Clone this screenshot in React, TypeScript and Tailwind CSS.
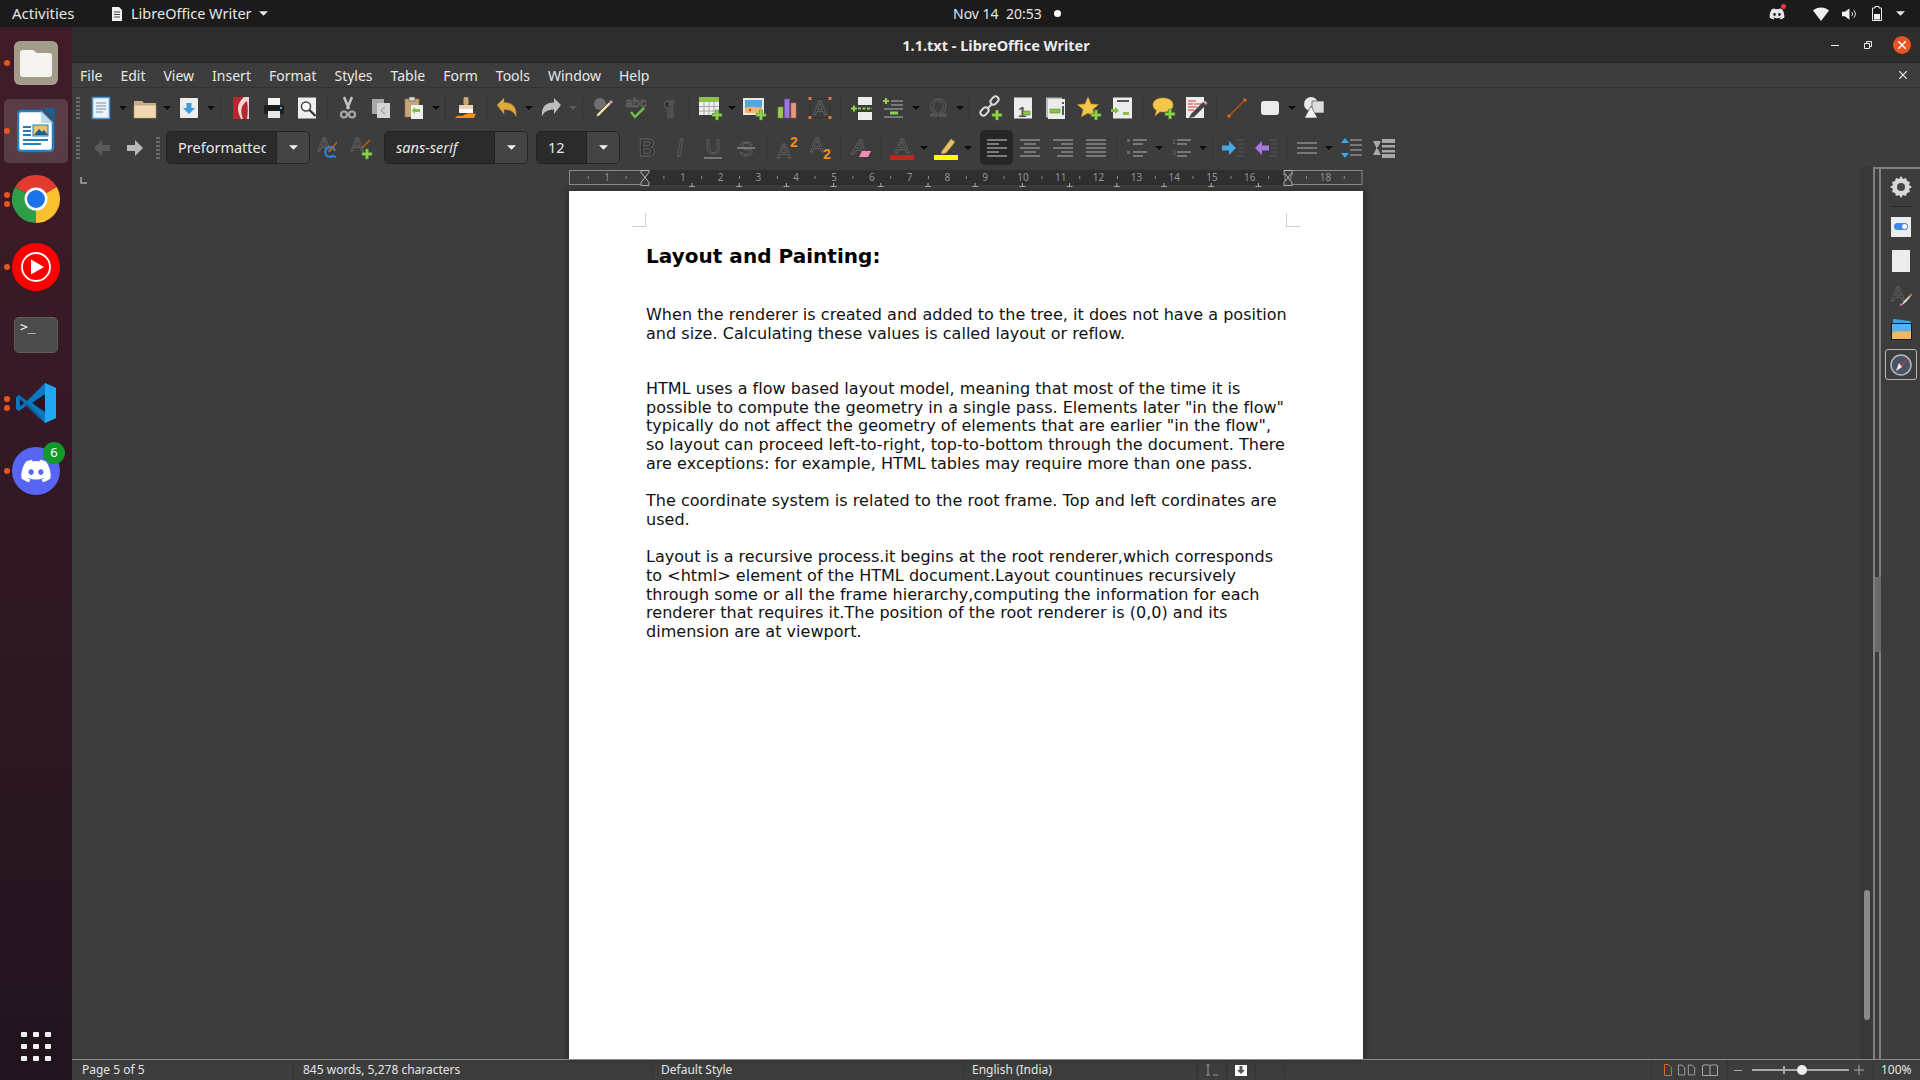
import { ReactNode } from "react";
import { FaDiscord } from "react-icons/fa6";

const Ico = ({ children, className = "w-[24px] h-[24px] overflow-visible" }: { children: ReactNode; className?: string }) => (
  <svg viewBox="0 0 24 24" className={className}>
    {children}
  </svg>
);

const Plus = ({ x = 14, y = 14 }: { x?: number; y?: number }) => (
  <path
    transform={`translate(${x} ${y})`}
    d="M3.5 0h3v3.5H10v3H6.500V10h-3V6.500H0v-3h3.500z"
    fill="#8fd14f"
    stroke="#4f8a22"
    strokeWidth="0.6"
  />
);

const Glyph = ({ t, x = 12, y = 20, size = 23, italic = false, bold = false }: { t: string; x?: number; y?: number; size?: number; italic?: boolean; bold?: boolean }) => (
  <text
    x={x}
    y={y}
    textAnchor="middle"
    fontFamily="Liberation Sans, sans-serif"
    fontSize={size}
    fontStyle={italic ? "italic" : "normal"}
    fontWeight={bold ? 700 : 400}
    fill="#303030"
    stroke="#666666"
    strokeWidth="0.8"
  >
    {t}
  </text>
);

const Lines = ({ rows, stroke = "#8c8c8c" }: { rows: [number, number, number][]; stroke?: string }) => (
  <g stroke={stroke} strokeWidth="1.500">
    {rows.map(([x1, x2, y], i) => (
      <line key={i} x1={x1} x2={x2} y1={y} y2={y} />
    ))}
  </g>
);

const Btn = ({ children }: { children?: ReactNode }) => (
  <div className="w-[33px] h-full shrink-0 flex items-center justify-center">{children}</div>
);

const Dd = ({ dim = false }: { dim?: boolean }) => (
  <div className="w-[11px] h-full shrink-0 flex items-center justify-center">
    <svg viewBox="0 0 8 4" className="w-[8px] h-[4px]">
      <path d="M0 0h8L4 4z" fill={dim ? "#5c5c5c" : "#0c0c0c"} />
    </svg>
  </div>
);

const Sep = () => (
  <div className="w-[8px] h-full shrink-0 flex items-center justify-center">
    <div className="w-px h-[28px] bg-[#333333]" />
  </div>
);

const Grip = () => (
  <div className="w-[4px] h-[24px] shrink-0 flex flex-col justify-between py-px">
    {[0, 1, 2, 3, 4, 5].map((i) => (
      <div key={i} className="h-[2px] bg-[#6b6b6b]" />
    ))}
  </div>
);

const Combo = ({ label, w, text, italic = false }: { label: string; w: string; text: string; italic?: boolean }) => (
  <div className={`${w} h-[33px] shrink-0 flex rounded-[5px] border border-[#222222] bg-[#2b2b2b] overflow-hidden`}>
    <div className="flex-1 min-w-0 pl-[11px]">
      <div className={`${text} text-[14.500px] leading-[31px] text-[#e8e8e8] overflow-hidden whitespace-nowrap ${italic ? "italic" : ""}`}>
        {label}
      </div>
    </div>
    <div className="w-[33px] shrink-0 flex items-center justify-center bg-[#444444] border-l border-[#222222]">
      <svg viewBox="0 0 8 4" className="w-[9px] h-[5px]">
        <path d="M0 0h8L4 4z" fill="#f2f2f2" />
      </svg>
    </div>
  </div>
);

const rulerNums = Array.from({ length: 18 }, (_, i) => i + 1);
const tabStops = Array.from({ length: 13 }, (_, i) => 123 + i * 47.2);

const Ruler = () => (
  <svg viewBox="0 0 794 20" className="w-[794px] h-[20px] block">
    <rect x="76" y="1" width="643" height="15" fill="#2f2f2f" />
    <rect x="0.500" y="1.500" width="76" height="14" fill="none" stroke="#8a8a8a" />
    <rect x="719" y="1.500" width="74" height="14" fill="none" stroke="#8a8a8a" />
    <text x="38" y="12" textAnchor="middle" fontSize="10" fill="#8f949b" fontFamily="Noto Sans, sans-serif">1</text>
    {rulerNums.map((n) => (
      <text key={n} x={76 + 37.8 * n} y="12" textAnchor="middle" fontSize="10" fill="#8f949b" fontFamily="Noto Sans, sans-serif">
        {n}
      </text>
    ))}
    {[-1.5, -0.5, ...rulerNums.map((n) => n - 0.5), 18.5].map((n) => (
      <line key={n} x1={76 + 37.8 * n} x2={76 + 37.8 * n} y1="7" y2="10" stroke="#8a8a8a" />
    ))}
    {tabStops.map((x) => (
      <path key={x} d={`M${x} 14v3M${x - 3} 17.500h6`} stroke="#b0b0b0" fill="none" />
    ))}
    {[76, 719].map((x) => (
      <path key={x} d={`M${x - 4} 1.500h8v2L${x} 8.500l-4-5zM${x} 8.500l4 5v3h-8v-3z`} fill="#3c3c3c" stroke="#b5b5b5" />
    ))}
  </svg>
);

const DockItem = ({ children, dots = 0, active = false }: { children: ReactNode; dots?: number; active?: boolean }) => (
  <div className="relative h-[68px] flex items-center justify-center">
    {active && <div className="absolute left-[4px] right-[4px] top-[2px] bottom-[2px] rounded-[5px] bg-[#ffffff24]" />}
    <div className="absolute left-[4px] top-0 bottom-0 flex flex-col justify-center gap-[3px]">
      {Array.from({ length: dots }).map((_, i) => (
        <div key={i} className="w-[6px] h-[6px] rounded-full bg-[#e9541f]" />
      ))}
    </div>
    <div className="relative">{children}</div>
  </div>
);

const Dock = () => (
  <aside className="w-[72px] shrink-0 flex flex-col pt-[2px] bg-gradient-to-b from-[#401c28] to-[#21141f]">
    <DockItem dots={1}>
      <svg viewBox="0 0 44 44" className="w-[44px] h-[44px]">
        <rect width="44" height="44" rx="6" fill="#a49c8b" />
        <path d="M6 12a3 3 0 0 1 3-3h10l4 3h12a3 3 0 0 1 3 3v18a3 3 0 0 1-3 3H9a3 3 0 0 1-3-3z" fill="#f6f4f0" />
      </svg>
    </DockItem>
    <DockItem dots={1} active>
      <svg viewBox="0 0 38 46" className="w-[38px] h-[46px]">
        <path d="M25 0h13v13z" fill="#1d5f8f" />
        <path d="M4 3h20l12 12v25a3 3 0 0 1-3 3H4a3 3 0 0 1-3-3V6a3 3 0 0 1 3-3z" fill="#fff" stroke="#1f80bd" strokeWidth="2.500" />
        <path d="M24 3v12h12z" fill="#bcdcef" />
        <rect x="6" y="18" width="8" height="2" fill="#1f80bd" />
        <rect x="6" y="22" width="8" height="2" fill="#1f80bd" />
        <rect x="6" y="26" width="8" height="2" fill="#1f80bd" />
        <rect x="16" y="17" width="15" height="11" fill="#e9c46a" stroke="#1f80bd" />
        <path d="M17 27l5-6 3 3 2-2 4 5z" fill="#1d5f8f" />
        <rect x="6" y="31" width="25" height="2" fill="#1f80bd" />
        <rect x="6" y="35" width="18" height="2" fill="#1f80bd" />
      </svg>
    </DockItem>
    <DockItem dots={2}>
      <svg viewBox="0 0 48 48" className="w-[48px] h-[48px]">
        <path d="M24 24L3.200 12A24 24 0 0 1 44.780 12Z" fill="#e33b2e" />
        <path d="M24 24L44.780 12A24 24 0 0 1 24 48Z" fill="#fbc02d" />
        <path d="M24 24L24 48A24 24 0 0 1 3.200 12Z" fill="#2e9e49" />
        <circle cx="24" cy="24" r="11.500" fill="#fff" />
        <circle cx="24" cy="24" r="9" fill="#1a73e8" />
      </svg>
    </DockItem>
    <DockItem dots={1}>
      <svg viewBox="0 0 48 48" className="w-[48px] h-[48px]">
        <circle cx="24" cy="24" r="24" fill="#ff0000" />
        <circle cx="24" cy="24" r="14" fill="none" stroke="#fff" strokeWidth="1.800" />
        <path d="M19 16.500L32 24l-13 7.500z" fill="#fff" />
      </svg>
    </DockItem>
    <DockItem>
      <div className="w-[44px] h-[36px] rounded-[5px] bg-[#4b4b4b] border border-[#5e5e5e] pl-[5px] pt-px text-[#f0f0f0] text-[13px] leading-[15px] font-['DejaVu_Sans_Mono',monospace]">
        &gt;_
      </div>
    </DockItem>
    <DockItem dots={2}>
      <svg viewBox="0 0 42 42" className="w-[42px] h-[42px]">
        <path d="M30 1L12 19 4 13 1 15v12l3 2 8-6 18 18 11-5V6z" fill="#0a78c2" />
        <path d="M1 15l3-2 23 21-3 3z" fill="#0a5f9e" opacity="0.5" />
        <path d="M30 1l11 5v30l-11 5z" fill="#22a7f2" />
        <path d="M30 12L17 21l13 9z" fill="#241722" />
        <path d="M5 17.500l4 3.500-4 3.500z" fill="#241722" />
      </svg>
    </DockItem>
    <DockItem dots={1}>
      <div className="w-[48px] h-[48px] rounded-full bg-[#5865f2] flex items-center justify-center">
        <FaDiscord className="w-[32px] h-[32px] text-white" />
      </div>
      <div className="absolute -right-[5px] -top-[5px] w-[22px] h-[22px] rounded-full bg-[#119a2a] flex items-center justify-center text-[13px] text-white">
        6
      </div>
    </DockItem>
    <div className="mt-auto mb-[19px] mx-auto grid grid-cols-3 gap-x-[6px] gap-y-[7px]">
      {[0, 1, 2, 3, 4, 5, 6, 7, 8].map((i) => (
        <div key={i} className="w-[6px] h-[5px] rounded-[1px] bg-[#f2f2f2]" />
      ))}
    </div>
  </aside>
);

const TopBar = () => (
  <header className="h-[27px] shrink-0 flex items-center bg-[#1b1b1b] text-[14.500px] text-[#e6e6e6]">
    <span className="ml-[12px] w-[99px] text-[15px]">Activities</span>
    <svg viewBox="0 0 12 14" className="w-[12px] h-[14px]">
      <path d="M1 0h7l3 3v11H1z" fill="#f0f0f0" />
      <path d="M3 5h6M3 7.500h6M3 10h6" stroke="#444" />
    </svg>
    <span className="ml-[8px] w-[128px] whitespace-nowrap">LibreOffice Writer</span>
    <svg viewBox="0 0 8 4" className="w-[9px] h-[5px]">
      <path d="M0 0h8L4 4z" fill="#e6e6e6" />
    </svg>
    <span className="ml-[685px] w-[94px] whitespace-pre text-[14px]">Nov 14  20:53</span>
    <div className="ml-[7px] w-[7px] h-[7px] rounded-full bg-white" />
    <div className="ml-auto flex items-center">
      <div className="relative w-[16px] h-[16px] mr-[28px]">
        <FaDiscord className="w-[16px] h-[16px] text-[#e6e6e6]" />
        <div className="absolute -right-px -top-[2px] w-[5px] h-[5px] rounded-full bg-[#ed3b3b]" />
      </div>
      <svg viewBox="0 0 16 14" className="w-[16px] h-[14px] mr-[13px]">
        <path d="M0 3.500C4-.500 12-.500 16 3.500L8 14z" fill="#f0f0f0" />
      </svg>
      <svg viewBox="0 0 16 14" className="w-[15px] h-[14px] mr-[15px]">
        <path d="M0 4.500h3L8 1v12L3 9.500H0z" fill="#f0f0f0" />
        <path d="M10.500 5a3 3 0 0 1 0 4M12.500 3a6 6 0 0 1 0 8" stroke="#f0f0f0" fill="none" />
      </svg>
      <svg viewBox="0 0 10 15" className="w-[10px] h-[15px] mr-[14px]">
        <path d="M3 .500h4v1.500h2.500v12.500h-9V2H3z" fill="none" stroke="#f0f0f0" />
        <rect x="2" y="8" width="6" height="5.500" fill="#f0f0f0" />
      </svg>
      <svg viewBox="0 0 8 4" className="w-[9px] h-[5px] mr-[15px]">
        <path d="M0 0h8L4 4z" fill="#e6e6e6" />
      </svg>
    </div>
  </header>
);

const TitleBar = () => (
  <div className="relative h-[36px] shrink-0 flex items-center justify-center pt-[2px] bg-[#2d2d2d] border-b border-[#262626]">
    <span className="text-[14.500px] font-bold text-[#ebebeb]">1.1.txt - LibreOffice Writer</span>
    <div className="absolute right-[9px] top-0 bottom-0 flex items-center">
      <div className="w-[8px] h-px bg-[#eeeeee] mr-[25px] mt-[2px]" />
      <svg viewBox="0 0 8 8" className="w-[8px] h-[8px] mr-[21px]">
        <path d="M.500 2.500h5v5h-5zM2.500 2V.500h5v5H6" fill="none" stroke="#eeeeee" />
      </svg>
      <div className="w-[18px] h-[18px] rounded-full bg-[#e95420] flex items-center justify-center">
        <svg viewBox="0 0 8 8" className="w-[8px] h-[8px]">
          <path d="M0 0l8 8M8 0L0 8" stroke="#fff" strokeWidth="1.500" />
        </svg>
      </div>
    </div>
  </div>
);

const MenuBar = () => (
  <div className="h-[25px] shrink-0 flex items-center pl-[8px] pr-[13px] border-b border-[#333333] text-[14px] text-[#e8e8e8]">
    {["File", "Edit", "View", "Insert", "Format", "Styles", "Table", "Form", "Tools", "Window", "Help"].map((m) => (
      <span key={m} className="mr-[18px]">
        {m}
      </span>
    ))}
    <svg viewBox="0 0 8 8" className="ml-auto w-[8px] h-[8px]">
      <path d="M0 0l8 8M8 0L0 8" stroke="#eeeeee" strokeWidth="1.200" />
    </svg>
  </div>
);

const ToolbarOne = () => (
  <div className="h-[40px] shrink-0 flex items-center pl-[4px]">
    <Grip />
    <div className="w-[4px]" />
    <Btn>
      <Ico>
        <rect x="3.500" y="1.500" width="17" height="21" fill="#eef3f8" stroke="#4a93cf" strokeWidth="1.500" />
        <Lines rows={[[7, 17, 7], [7, 17, 10], [7, 17, 13], [7, 14, 16]]} stroke="#9fb2c4" />
      </Ico>
    </Btn>
    <Dd />
    <Btn>
      <Ico>
        <path d="M1 5h8l2 2h12v5H1z" fill="#c8b08a" />
        <rect x="1" y="9" width="22" height="13" fill="#f0d9ae" stroke="#b39a70" strokeWidth="0.600" />
      </Ico>
    </Btn>
    <Dd />
    <Btn>
      <Ico>
        <rect x="3" y="2" width="18" height="20" rx="1" fill="#eeeeee" />
        <path d="M9.500 7h5v5h3.500L12 18l-6-6h3.500z" fill="#3f9ade" />
      </Ico>
    </Btn>
    <Dd />
    <Sep />
    <Btn>
      <Ico>
        <rect x="4" y="1" width="16" height="22" fill="#b5282e" />
        <path d="M20 1h-5C7 9 8 14 12 23h2C11 15 12 9 18 5c1 6 1 12 0 18h2z" fill="#f3d5d5" />
      </Ico>
    </Btn>
    <Btn>
      <Ico>
        <rect x="6" y="2" width="12" height="7" fill="#f2f2f2" />
        <rect x="2" y="9" width="20" height="9" rx="1.500" fill="#1c1c1c" />
        <rect x="6" y="15" width="12" height="7" fill="#e6e6e6" />
        <rect x="18" y="11" width="2" height="2" fill="#33b5e5" />
      </Ico>
    </Btn>
    <Btn>
      <Ico>
        <rect x="3" y="1.500" width="18" height="21" fill="#eeeeee" />
        <circle cx="11" cy="10.500" r="4.500" fill="#fff" stroke="#444" strokeWidth="1.500" />
        <path d="M14.500 14l6 6" stroke="#333" strokeWidth="2.200" />
      </Ico>
    </Btn>
    <Sep />
    <Btn>
      <Ico>
        <path d="M8 1l5 12M16 1l-5 12" stroke="#c4c4c4" strokeWidth="2.500" />
        <circle cx="8" cy="18.500" r="3" fill="none" stroke="#a8a8a8" strokeWidth="2.200" />
        <circle cx="16" cy="18.500" r="3" fill="none" stroke="#a8a8a8" strokeWidth="2.200" />
      </Ico>
    </Btn>
    <Btn>
      <Ico>
        <rect x="3" y="3" width="12" height="15" fill="#a8a8a8" />
        <rect x="8" y="7" width="13" height="15" fill="#d4d4d4" />
        <path d="M16 11l-4 3.500 4 3.500" stroke="#a8a8a8" fill="none" strokeWidth="1.500" />
      </Ico>
    </Btn>
    <Btn>
      <Ico>
        <rect x="3" y="3" width="14" height="18" fill="#c8a878" stroke="#8b6f48" strokeWidth="0.600" />
        <rect x="7" y="1" width="6" height="4" fill="#d8d8d8" stroke="#555" strokeWidth="0.600" />
        <rect x="9" y="9" width="12" height="14" fill="#f0f0f0" />
        <path d="M18 13h-5v-2l-3 3.500 3 3.500v-2h5z" fill="#7bc043" />
      </Ico>
    </Btn>
    <Dd />
    <Sep />
    <Btn>
      <Ico>
        <rect x="9.500" y="1" width="5" height="8" rx="1.500" fill="#c8a878" />
        <rect x="5" y="9" width="14" height="4" fill="#e8d4b0" />
        <rect x="5" y="13" width="14" height="4" fill="#ffffff" />
        <path d="M1 22c3-4 6-1 9-3s8-2 12-1l-2 4z" fill="#f28c1e" />
      </Ico>
    </Btn>
    <Sep />
    <Btn>
      <Ico>
        <path d="M2 9l7-7v4.500c8 0 13 4 12 14-2-5-6-7-12-7V18z" fill="#e0a93e" stroke="#b8842a" strokeWidth="0.500" />
      </Ico>
    </Btn>
    <Dd />
    <Btn>
      <Ico>
        <path d="M22 9l-7-7v4.500C7 6.500 2 10.500 3 20.500c2-5 6-7 12-7V18z" fill="#bdbdbd" />
      </Ico>
    </Btn>
    <Dd dim />
    <Sep />
    <Btn>
      <Ico>
        <circle cx="9" cy="8" r="6" fill="#6f6f6f" />
        <path d="M5 21l3-1 12-12-2-2L6 18z" fill="#f0e0a8" stroke="#333" strokeWidth="0.600" />
        <path d="M18 6l2 2 2-2-2-2z" fill="#e88ad0" />
      </Ico>
    </Btn>
    <Btn>
      <Ico>
        <Glyph t="abc" y={11} size={13} />
        <path d="M7 16l4 5 9-9" fill="none" stroke="#6cc04a" strokeWidth="2.500" />
      </Ico>
    </Btn>
    <Btn>
      <Ico>
        <Glyph t="¶" y={19} size={20} bold />
      </Ico>
    </Btn>
    <Sep />
    <Btn>
      <Ico>
        <rect x="1" y="1" width="20" height="18" fill="#f0f0f0" />
        <rect x="1" y="1" width="20" height="5" fill="#8fc04a" />
        <path d="M1 10.500h20M1 15h20M6 6v13M11 6v13M16 6v13" stroke="#a8a8a8" />
        <Plus />
      </Ico>
    </Btn>
    <Dd />
    <Btn>
      <Ico>
        <rect x="1" y="2" width="21" height="17" fill="#e8e8e8" />
        <rect x="3" y="4" width="17" height="13" fill="#4fa8e0" />
        <path d="M3 12c6-3 11 0 17-1v6H3z" fill="#f0b860" />
        <circle cx="8" cy="14" r="1.200" fill="#d23b2b" />
        <Plus />
      </Ico>
    </Btn>
    <Btn>
      <Ico>
        <rect x="3" y="11" width="5" height="11" fill="#9ccc4e" stroke="#6f9a30" strokeWidth="0.600" />
        <rect x="9.500" y="3" width="5" height="19" fill="#9a78d8" stroke="#6f4fae" strokeWidth="0.600" />
        <rect x="16" y="7" width="5" height="15" fill="#e89a80" stroke="#b86a50" strokeWidth="0.600" />
      </Ico>
    </Btn>
    <Btn>
      <Ico>
        <rect x="2" y="2.500" width="20" height="19" fill="none" stroke="#2a2a2a" strokeDasharray="2 1.500" />
        <Glyph t="A" y={19} size={20} />
        <g fill="#e0783a">
          <rect x="0.500" y="1" width="3" height="3" />
          <rect x="20.500" y="1" width="3" height="3" />
          <rect x="0.500" y="20" width="3" height="3" />
          <rect x="20.500" y="20" width="3" height="3" />
        </g>
      </Ico>
    </Btn>
    <Sep />
    <Btn>
      <Ico>
        <rect x="9" y="1" width="14" height="8" fill="#ececec" />
        <rect x="9" y="16" width="14" height="8" fill="#ececec" />
        <path d="M9 12.500h14" stroke="#8fd14f" strokeWidth="2" strokeDasharray="3 1.500" />
        <path d="M2 11.500h2V9.500h2v2h2v2H6v2H4v-2H2z" fill="#8fd14f" />
      </Ico>
    </Btn>
    <Btn>
      <Ico>
        <path d="M1 4h2V2h2v2h2v2H5v2H3V6H1z" fill="#8fd14f" />
        <Lines rows={[[9, 21, 5], [9, 21, 9], [2, 21, 13], [2, 21, 21]]} />
        <rect x="8" y="15.500" width="8" height="3" fill="#8fd14f" />
      </Ico>
    </Btn>
    <Dd />
    <Btn>
      <Ico>
        <Glyph t="Ω" y={20} size={23} />
      </Ico>
    </Btn>
    <Dd />
    <Sep />
    <Btn>
      <Ico>
        <g fill="none" stroke="#d8d8d8" strokeWidth="2">
          <rect x="12" y="1.500" width="9" height="6" rx="3" transform="rotate(-45 16.500 4.500)" />
          <rect x="2" y="12.500" width="9" height="6" rx="3" transform="rotate(-45 6.500 15.500)" />
          <path d="M9 13l5-5" />
        </g>
        <Plus />
      </Ico>
    </Btn>
    <Btn>
      <Ico>
        <rect x="3" y="1.500" width="18" height="21" fill="#ececec" />
        <text x="7" y="21" fontSize="15" fontWeight="700" fill="#555" fontFamily="Liberation Sans, sans-serif">1</text>
        <rect x="12" y="15" width="7" height="4" fill="#8cc04a" stroke="#5c8a26" strokeWidth="0.600" />
      </Ico>
    </Btn>
    <Btn>
      <Ico>
        <rect x="2" y="1.500" width="16" height="20" fill="#bcbcbc" />
        <rect x="4" y="3" width="17" height="20" fill="#ececec" />
        <rect x="6" y="13" width="10" height="4" fill="#8cc04a" stroke="#5c8a26" strokeWidth="0.600" />
        <rect x="18" y="6" width="2" height="2" fill="#555" />
        <rect x="18" y="10" width="2" height="9" fill="#555" />
      </Ico>
    </Btn>
    <Btn>
      <Ico>
        <path d="M11 1l3 7 7.500.600-5.700 4.900 1.800 7.300L11 17l-6.600 3.800 1.800-7.300L.500 8.600 8 8z" fill="#f5c64c" stroke="#c98f20" strokeWidth="0.600" />
        <Plus />
      </Ico>
    </Btn>
    <Btn>
      <Ico>
        <rect x="3" y="1.500" width="19" height="21" fill="#ececec" />
        <path d="M7 5h12" stroke="#555" strokeWidth="2" />
        <path d="M1 13h4v-2l4 3.500-4 3.500v-2H1z" fill="#7bc043" />
        <rect x="13" y="16" width="6" height="3" fill="#8cc04a" />
      </Ico>
    </Btn>
    <Sep />
    <Btn>
      <Ico>
        <path d="M2 9c0-5 5-7 10-7s10 2 10 7-5 7-10 7c-1 0-2 0-3-.300L4 20l1.500-5.500C3 13 2 11 2 9z" fill="#f5c64c" stroke="#c98f20" strokeWidth="0.600" />
        <Plus y={13} />
      </Ico>
    </Btn>
    <Btn>
      <Ico>
        <rect x="2" y="1" width="18" height="21" fill="#ececec" />
        <path d="M4 5h8M4 8h5M10 8h7M4 11h9M4 14h6" stroke="#d23b2b" strokeWidth="1.200" />
        <path d="M5 22l2-4L19 6l3 3L10 21z" fill="#444" />
        <path d="M19 6l3 3 1.500-2-2.500-2.500z" fill="#e88ad0" />
      </Ico>
    </Btn>
    <Sep />
    <Btn>
      <Ico>
        <path d="M4 20L20 4" stroke="#b8561c" strokeWidth="1.200" />
        <rect x="2.500" y="18.500" width="3" height="3" fill="#d9661e" />
        <rect x="18.500" y="2.500" width="3" height="3" fill="#d9661e" />
      </Ico>
    </Btn>
    <Btn>
      <Ico>
        <rect x="3" y="5" width="18" height="14" rx="3" fill="#ececec" />
      </Ico>
    </Btn>
    <Dd />
    <Btn>
      <Ico>
        <circle cx="9" cy="8" r="7" fill="#e8e8e8" />
        <rect x="10" y="5" width="12" height="12" fill="#dcdcdc" stroke="#3c3c3c" strokeWidth="0.600" />
        <path d="M9 10l6.500 12h-13z" fill="#f2f2f2" stroke="#3c3c3c" strokeWidth="0.600" />
      </Ico>
    </Btn>
  </div>
);

const ToolbarTwo = () => (
  <div className="h-[39px] shrink-0 flex items-center pl-[4px]">
    <Grip />
    <div className="w-[5px]" />
    <Btn>
      <Ico>
        <path d="M4 12l8-8v5h8v6h-8v5z" fill="#5a5a5a" />
      </Ico>
    </Btn>
    <Btn>
      <Ico>
        <path d="M20 12l-8-8v5H4v6h8v5z" fill="#b8b8b8" />
      </Ico>
    </Btn>
    <div className="w-[5px]" />
    <Grip />
    <div className="w-[6px]" />
    <Combo label="Preformatted" w="w-[144px]" text="w-[88px]" />
    <Btn>
      <Ico>
        <Glyph t="A" x={9} y={15} size={19} />
        <path d="M20 15a5 5 0 1 0-2 5l3 1" fill="none" stroke="#2f7fd8" strokeWidth="2.200" />
        <path d="M14 16l8-10" stroke="#b8661c" strokeWidth="1.500" />
      </Ico>
    </Btn>
    <Btn>
      <Ico>
        <Glyph t="A" x={9} y={15} size={19} />
        <Plus y={13} />
        <path d="M14 12l8-8" stroke="#b8661c" strokeWidth="1.500" />
      </Ico>
    </Btn>
    <div className="w-[8px]" />
    <Combo label="sans-serif" w="w-[144px]" text="w-[88px]" italic />
    <div className="w-[8px]" />
    <Combo label="12" w="w-[84px]" text="w-[30px]" />
    <div className="w-[10px]" />
    <Btn>
      <Ico>
        <Glyph t="B" bold />
      </Ico>
    </Btn>
    <Btn>
      <Ico>
        <Glyph t="I" italic />
      </Ico>
    </Btn>
    <Btn>
      <Ico>
        <Glyph t="U" y={18} size={21} />
        <path d="M3 22h18" stroke="#8a8a8a" strokeWidth="1.500" />
      </Ico>
    </Btn>
    <Btn>
      <Ico>
        <Glyph t="S" size={21} />
        <path d="M3 12h18" stroke="#8a8a8a" strokeWidth="1.500" />
      </Ico>
    </Btn>
    <Sep />
    <Btn>
      <Ico>
        <Glyph t="A" x={9} y={22} size={20} />
        <text x="19" y="11" textAnchor="middle" fontSize="14" fontWeight="700" fill="#f28c1e" fontFamily="Liberation Sans, sans-serif">2</text>
      </Ico>
    </Btn>
    <Btn>
      <Ico>
        <Glyph t="A" x={9} y={16} size={20} />
        <text x="19" y="23" textAnchor="middle" fontSize="14" fontWeight="700" fill="#f28c1e" fontFamily="Liberation Sans, sans-serif">2</text>
      </Ico>
    </Btn>
    <Sep />
    <Btn>
      <Ico>
        <Glyph t="A" x={10} y={18} size={21} italic />
        <path d="M10 21l3-6h9l-3 6z" fill="#f28cbc" />
      </Ico>
    </Btn>
    <Sep />
    <Btn>
      <Ico>
        <Glyph t="A" y={17} size={21} />
        <rect x="0" y="19" width="24" height="5" fill="#c9211e" />
      </Ico>
    </Btn>
    <Dd />
    <Btn>
      <Ico>
        <path d="M8 15l9-12 4 3-9 11-5 1z" fill="#e9c160" stroke="#a8832a" strokeWidth="0.500" />
        <rect x="0" y="19" width="24" height="5" fill="#ffff00" />
      </Ico>
    </Btn>
    <Dd />
    <div className="w-[7px]" />
    <div className="w-[33px] h-[35px] shrink-0 rounded-[5px] bg-[#262626] flex items-center justify-center">
      <Ico>
        <Lines rows={[[2, 22, 4], [2, 14, 8], [2, 22, 12], [2, 14, 16], [2, 22, 20]]} stroke="#9a9a9a" />
      </Ico>
    </div>
    <Btn>
      <Ico>
        <Lines rows={[[2, 22, 4], [6, 18, 8], [2, 22, 12], [6, 18, 16], [2, 22, 20]]} />
      </Ico>
    </Btn>
    <Btn>
      <Ico>
        <Lines rows={[[2, 22, 4], [10, 22, 8], [2, 22, 12], [10, 22, 16], [6, 22, 20]]} />
      </Ico>
    </Btn>
    <Btn>
      <Ico>
        <Lines rows={[[2, 22, 4], [2, 22, 8], [2, 22, 12], [2, 22, 16], [2, 22, 20]]} />
      </Ico>
    </Btn>
    <Sep />
    <Btn>
      <Ico>
        <Lines rows={[[8, 22, 4], [8, 18, 8], [8, 22, 16], [8, 18, 20]]} />
        <rect x="2" y="3" width="3" height="3" fill="#6a6a6a" />
        <rect x="2" y="15" width="3" height="3" fill="#6a6a6a" />
      </Ico>
    </Btn>
    <Dd />
    <Btn>
      <Ico>
        <Lines rows={[[8, 22, 4], [8, 18, 8], [8, 22, 16], [8, 18, 20]]} />
        <text x="3" y="8" fontSize="7" fill="#6a6a6a" fontFamily="Liberation Sans, sans-serif">1</text>
        <text x="3" y="19" fontSize="7" fill="#6a6a6a" fontFamily="Liberation Sans, sans-serif">3</text>
      </Ico>
    </Btn>
    <Dd />
    <Sep />
    <Btn>
      <Ico>
        <path d="M1 9.500h7V5l7 7-7 7v-4.500H1z" fill="#4aa8e8" />
        <Lines rows={[[15, 23, 4], [17, 23, 8], [17, 23, 12], [17, 23, 16], [15, 23, 20]]} stroke="#4c4c4c" />
      </Ico>
    </Btn>
    <Btn>
      <Ico>
        <path d="M15 9.500H8V5l-7 7 7 7v-4.500h7z" fill="#a878e0" />
        <Lines rows={[[15, 23, 4], [17, 23, 8], [17, 23, 12], [17, 23, 16], [15, 23, 20]]} stroke="#4c4c4c" />
      </Ico>
    </Btn>
    <Sep />
    <Btn>
      <Ico>
        <Lines rows={[[2, 22, 7], [2, 22, 12], [2, 22, 17]]} />
      </Ico>
    </Btn>
    <Dd />
    <Btn>
      <Ico>
        <path d="M6 2l4 5H2zM6 22l-4-5h8z" fill="#3aa6e8" />
        <Lines rows={[[11, 23, 4], [11, 23, 9], [11, 23, 14], [11, 23, 19]]} />
      </Ico>
    </Btn>
    <Btn>
      <Ico>
        <path d="M1 5h8L6 11h-1v2h1l3 6H1l3-6V11z" fill="#a8a8a8" />
        <rect x="10" y="3" width="13" height="4" fill="#a8a8a8" />
        <rect x="10" y="9" width="13" height="2.500" fill="#a8a8a8" />
        <rect x="10" y="14" width="13" height="2.500" fill="#a8a8a8" />
        <rect x="10" y="18" width="13" height="4" fill="#a8a8a8" />
      </Ico>
    </Btn>
  </div>
);

const DocPage = () => (
  <div className="ml-[497px] w-[794px] flex-1 min-h-0 bg-white shadow-[-3px_0_5px_#2f2f2f,3px_0_5px_#2f2f2f] pt-[22px] px-[63px] font-['DejaVu_Sans',sans-serif] text-[16px] leading-[18.670px] tracking-[0.03px] text-[#111111] overflow-hidden">
    <div className="flex justify-between">
      <div className="w-[14px] h-[14px] border-r border-b border-[#cfcfcf]" />
      <div className="w-[14px] h-[14px] border-l border-b border-[#cfcfcf]" />
    </div>
    <div className="pl-[14px]">
      <h1 className="mt-[18px] text-[20px] leading-[22px] font-bold text-black">Layout and Painting:</h1>
      <p className="mt-[39px]">
        When the renderer is created and added to the tree, it does not have a position
        <br />
        and size. Calculating these values is called layout or reflow.
      </p>
      <p className="mt-[36.800px]">
        HTML uses a flow based layout model, meaning that most of the time it is
        <br />
        possible to compute the geometry in a single pass. Elements later "in the flow"
        <br />
        typically do not affect the geometry of elements that are earlier "in the flow",
        <br />
        so layout can proceed left-to-right, top-to-bottom through the document. There
        <br />
        are exceptions: for example, HTML tables may require more than one pass.
      </p>
      <p className="mt-[18.670px]">
        The coordinate system is related to the root frame. Top and left cordinates are
        <br />
        used.
      </p>
      <p className="mt-[18.670px]">
        Layout is a recursive process.it begins at the root renderer,which corresponds
        <br />
        to &lt;html&gt; element of the HTML document.Layout countinues recursively
        <br />
        through some or all the frame hierarchy,computing the information for each
        <br />
        renderer that requires it.The position of the root renderer is (0,0) and its
        <br />
        dimension are at viewport.
      </p>
    </div>
  </div>
);

const Sidebar = () => (
  <div className="w-[47px] shrink-0 border-t-2 border-l-2 border-[#808080] flex flex-col">
    <div className="relative flex-1 border-l-2 border-[#808080] ml-[4px] flex flex-col items-center pt-[6px]">
      <svg viewBox="0 0 24 24" className="w-[24px] h-[24px]">
        <path d="M12 1l2 3 3-1 1 3 3 1-1 3 3 2-3 2 1 3-3 1-1 3-3-1-2 3-2-3-3 1-1-3-3-1 1-3-3-2 3-2-1-3 3-1 1-3 3 1z" fill="#d8d8d8" />
        <circle cx="12" cy="12" r="4" fill="#444" />
      </svg>
      <div className="w-[22px] h-px bg-[#2b2b2b] mt-[7px] mb-[10px]" />
      <svg viewBox="0 0 20 20" className="w-[20px] h-[20px]">
        <rect width="20" height="20" fill="#ececec" />
        <rect x="3" y="6" width="14" height="7" rx="3.500" fill="#3f86e8" />
        <circle cx="13.500" cy="9.500" r="2.500" fill="#fff" />
      </svg>
      <svg viewBox="0 0 18 22" className="w-[18px] h-[22px] mt-[13px]">
        <rect width="18" height="22" fill="#ececec" />
      </svg>
      <svg viewBox="0 0 24 24" className="w-[24px] h-[24px] mt-[11px]">
        <Glyph t="A" x={9} y={18} size={20} />
        <path d="M12 23l3-5 7-7 1 1-6 7z" fill="#d8d8d8" />
        <path d="M10 23l2-3 2 2z" fill="#e85fc0" />
        <path d="M20 13l3-3 .500 1-2 3z" fill="#b8661c" />
      </svg>
      <svg viewBox="0 0 22 22" className="w-[22px] h-[22px] mt-[12px]">
        <rect x="2" y="1" width="18" height="16" fill="#3aa6e8" transform="rotate(8 11 9)" />
        <rect x="1" y="4" width="21" height="17" fill="#1c1c1c" />
        <rect x="2" y="5" width="19" height="15" fill="#5ab0e8" />
        <path d="M2 14c6-3 12 0 19-2v8H2z" fill="#f0b860" />
      </svg>
      <div className="mt-[8px] w-[32px] h-[31px] rounded-[3px] border border-[#b8b8b8] flex items-center justify-center">
        <svg viewBox="0 0 22 22" className="w-[22px] h-[22px]">
          <circle cx="11" cy="11" r="10" fill="#4a5468" stroke="#b8b8b8" strokeWidth="1.500" />
          <path d="M17 5l-5 5-6 7 6-4z" fill="#d23b2b" />
          <path d="M9 9l-3 8 6-4z" fill="#f0f0f0" />
        </svg>
      </div>
      <div className="absolute -left-[6px] top-[408px] w-[6px] h-[75px] bg-[#6a6a6a]" />
    </div>
  </div>
);

const StatusBar = () => (
  <div className="h-[21px] shrink-0 flex items-center border-t border-[#8a8a8a] text-[12px] text-[#e4e4e4] whitespace-nowrap">
    <div className="w-[221px] pl-[10px] h-full leading-[20px]">Page 5 of 5</div>
    <div className="w-[359px] pl-[9px] h-full leading-[20px] border-l border-[#333333]">845 words, 5,278 characters</div>
    <div className="w-[311px] pl-[8px] h-full leading-[20px] border-l border-[#333333]">Default Style</div>
    <div className="w-[234px] pl-[8px] h-full leading-[20px] border-l border-[#333333]">English (India)</div>
    <div className="w-[29px] h-full border-l border-[#333333] flex items-center pl-[7px]">
      <svg viewBox="0 0 14 12" className="w-[14px] h-[12px]">
        <path d="M1 1h4M1 11h4M3 1v10M8 11h5" stroke="#9a9a9a" fill="none" />
      </svg>
    </div>
    <div className="w-[29px] h-full border-l border-[#333333] flex items-center pl-[8px]">
      <div className="w-[12px] h-[11px] bg-white flex items-center justify-center">
        <svg viewBox="0 0 8 8" className="w-[8px] h-[8px]">
          <path d="M2.500 0h3v4H8L4 8 0 4h2.500z" fill="#555" />
        </svg>
      </div>
    </div>
    <div className="w-[29px] h-full border-l border-[#333333]" />
    <div className="flex-1 h-full border-l border-[#333333]" />
    <div className="w-[76px] h-full border-l border-[#333333] flex items-center pl-[12px] gap-[4px]">
      <svg viewBox="0 0 8 12" className="w-[8px] h-[12px]">
        <path d="M.500.500h4l3 3v8h-7z" fill="none" stroke="#e0691c" />
      </svg>
      <svg viewBox="0 0 20 12" className="ml-[2px] w-[18px] h-[12px]">
        <path d="M.500.500h4l3 3v8h-7zM11.500.500h4l3 3v8h-7z" fill="none" stroke="#a8a8a8" />
      </svg>
      <svg viewBox="0 0 16 12" className="ml-[2px] w-[16px] h-[12px]">
        <path d="M8 1.500C6 .500 3 .500 .500 1.500v10h15v-10C13 .500 10 .500 8 1.500zv10" fill="none" stroke="#a8a8a8" />
      </svg>
    </div>
    <div className="w-[146px] pl-[6px] h-full border-l border-[#333333] flex items-center">
      <div className="w-[8px] h-px bg-[#a8a8a8]" />
      <div className="relative ml-[10px] w-[97px] h-[2px] bg-[#a8a8a8]">
        <div className="absolute left-[31px] -top-[3px] w-[2px] h-[8px] bg-[#a8a8a8]" />
        <div className="absolute left-[45px] -top-[4px] w-[10px] h-[10px] rounded-full bg-[#eeeeee]" />
      </div>
      <svg viewBox="0 0 10 10" className="ml-[5px] w-[10px] h-[10px]">
        <path d="M5 0v10M0 5h10" stroke="#a8a8a8" />
      </svg>
    </div>
    <div className="w-[47px] h-full pl-[7px] leading-[20px] border-l border-[#333333]">100%</div>
  </div>
);

export default function App() {
  return (
    <div className="w-[1920px] h-[1080px] flex flex-col overflow-hidden bg-[#3d3d3d] font-['Noto_Sans',sans-serif]">
      <TopBar />
      <div className="flex-1 min-h-0 flex">
        <Dock />
        <main className="flex-1 min-w-0 flex flex-col">
          <TitleBar />
          <MenuBar />
          <ToolbarOne />
          <ToolbarTwo />
          <div className="flex-1 min-h-0 flex">
            <div className="flex-1 min-w-0 flex flex-col">
              <div className="h-[24px] shrink-0 flex pt-[2px]">
                <svg viewBox="0 0 7 7" className="ml-[8px] mt-[8px] w-[7px] h-[7px]">
                  <path d="M1 0v6h6" fill="none" stroke="#a8a8a8" strokeWidth="1.500" />
                </svg>
                <div className="ml-[482px]">
                  <Ruler />
                </div>
              </div>
              <DocPage />
            </div>
            <div className="w-[13px] shrink-0 bg-[#383838] flex flex-col justify-end pb-[39px] pl-[4px]">
              <div className="w-[6px] h-[130px] rounded-[3px] bg-[#8a8a8a]" />
            </div>
            <Sidebar />
          </div>
          <StatusBar />
        </main>
      </div>
    </div>
  );
}
